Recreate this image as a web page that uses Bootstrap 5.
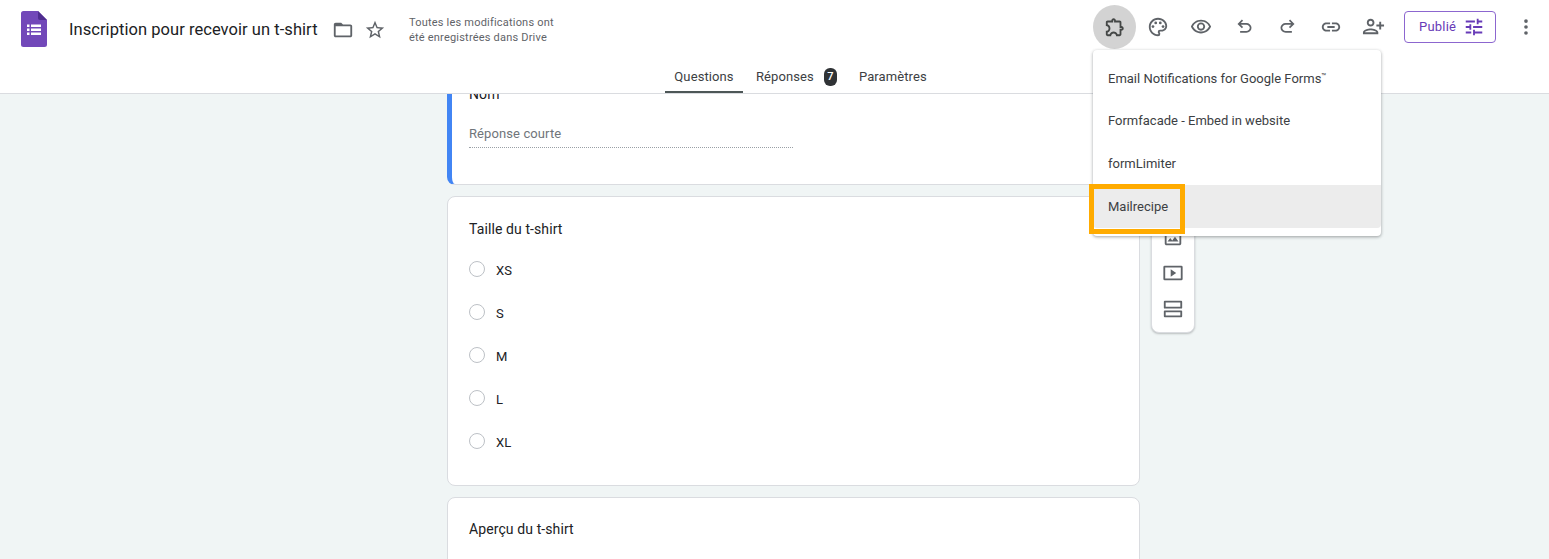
<!DOCTYPE html>
<html lang="fr">
<head>
<meta charset="utf-8">
<title>Inscription pour recevoir un t-shirt</title>
<link href="https://cdn.jsdelivr.net/npm/bootstrap@5.3.0/dist/css/bootstrap.min.css" rel="stylesheet">
<style>
html,body{height:100%;overflow:hidden}
body{font-family:Roboto,"Liberation Sans",sans-serif;background:#f0f5f5;color:#202124;font-size:14px}
.gf-shell{height:559px}
.gf-head{height:94px;background:#fff;border-bottom:1px solid #dadce0;position:relative;z-index:3;flex:none}
.gf-top{height:57px;padding-left:21px;padding-top:3px}
.gf-logo{width:26px;height:36px;display:block;margin-top:-3px}
.gf-title{font-size:16.5px;line-height:24px;margin-left:22px;width:258px;white-space:nowrap;color:#202124;letter-spacing:.05px}
.gf-ico{width:32px;height:32px;display:flex;align-items:center;justify-content:center;color:#5f6368;padding:0;border:0;background:none}
.gf-ico svg{fill:currentColor;display:block}
.gf-status{font-size:11px;line-height:15.5px;color:#5f6368;margin-left:18px;width:180px;letter-spacing:.2px}
.gf-tools{margin-left:auto;margin-right:2px;margin-top:-7px}
.gf-tool{width:43px;height:44px;display:flex;align-items:center;justify-content:center;color:#5f6368;background:none;border:0;padding:0;border-radius:50%}
.gf-tool svg{fill:currentColor;display:block}
.gf-tool-on{background:#d3d3d3;color:#444746}
.gf-tool-gap{margin-right:1px}
.gf-pub{width:92px;height:32px;margin-left:9px;margin-right:8px;border:1px solid #8c66cf;border-radius:4px;color:#673ab7;font-size:13px;letter-spacing:.2px;padding:0 10px 0 14px;background:#fff;display:flex;align-items:center;justify-content:space-between}
.gf-pub svg{fill:#673ab7;display:block}
.gf-tabs{height:36px;padding-left:665px}
.gf-tab{height:36px;line-height:40px;font-size:13px;letter-spacing:.1px;color:#3c4043;padding:0;text-decoration:none;display:flex;align-items:flex-start}
.gf-tab-on{width:78px;justify-content:center;border-bottom:2px solid #4d5757;color:#3c4043}
.gf-tab-a{margin-left:13px}
.gf-tab-b{margin-left:22px}
.gf-count{width:13px;height:18px;background:#303336;color:#fff;border-radius:6px;font-size:11px;line-height:18px;text-align:center;font-weight:500;margin:11px 0 0 10px}
.gf-body{flex:1;overflow:hidden;position:relative;padding-left:447px;gap:11px}
.gf-col{width:693px;flex:none;gap:11px}
.gf-qcard{border:1px solid #dadce0;border-radius:8px;background:#fff;padding:0 21px;flex:none;box-shadow:none}
.gf-q1{margin-top:-30px;height:121px;border-left:5px solid #4285f4;border-top:0;padding:20px 0 0 17px}
.gf-q2{height:290px;padding-top:22px}
.gf-q3{height:120px;padding-top:21px}
.gf-label{font-size:14px;line-height:21px;color:#202124;letter-spacing:.1px}
.gf-short{width:324px;margin-top:19px;height:24px;border-bottom:1px dotted #9aa0a6;color:#70757a;font-size:13px;line-height:19px;letter-spacing:.1px}
.gf-opts{margin-top:9px}
.gf-opt{height:43px;font-size:13px;color:#202124;letter-spacing:.1px}
.gf-radio{width:16px;height:16px;border:1px solid #bdc1c6;border-radius:50%;margin-right:11px;flex:none;margin-top:-4px}
.gf-side{width:44px;height:233px;margin-top:6px;background:#fff;border:1px solid #dadce0;border-radius:8px;box-shadow:0 1px 2px rgba(60,64,67,.3);flex:none;padding-bottom:5px;color:#5f6368;justify-content:flex-end;align-items:center}
.gf-side svg{display:block;fill:currentColor}
.gf-sidebtn{height:36px;display:flex;align-items:center}
.gf-menu{position:absolute;left:1093px;top:50px;width:288px;height:186px;background:#fff;border-radius:4px;z-index:5;padding-top:5px;box-shadow:0 1px 3px rgba(60,64,67,.35),0 1px 3px 1px rgba(60,64,67,.1)}
.gf-item{height:43px;line-height:43px;padding:0 0 0 15px;font-size:13px;color:#3c4043;border:0;background:transparent;letter-spacing:0;white-space:nowrap}
.gf-item-first{height:44px}
.gf-item-on{background:#ececec;position:relative}
.gf-mark{position:absolute;left:-4px;top:-1px;width:96px;height:50px;border:5px solid #ffab00;pointer-events:none}
.gf-tm{font-size:8px;vertical-align:4px}
</style>
</head>
<body>
<div class="gf-shell d-flex flex-column position-relative">
  <header class="gf-head">
    <div class="gf-top d-flex align-items-center">
      <svg class="gf-logo" viewBox="0 0 26 36" aria-hidden="true">
        <path d="M2.5 0H17l9 9v24.5a2.500 2.500 0 0 1-2.500 2.500h-21A2.500 2.500 0 0 1 0 33.500v-31A2.500 2.500 0 0 1 2.500 0z" fill="#7248b9"/>
        <path d="M17 0l9 9h-7a2 2 0 0 1-2-2z" fill="#4f2d8f"/>
        <g fill="#fff"><rect x="6" y="13.500" width="2.500" height="2.500"/><rect x="6" y="17.500" width="2.500" height="2.500"/><rect x="6" y="21.500" width="2.500" height="2.500"/><rect x="10" y="13.500" width="10" height="2.500"/><rect x="10" y="17.500" width="10" height="2.500"/><rect x="10" y="21.500" width="10" height="2.500"/></g>
      </svg>
      <div class="gf-title">Inscription pour recevoir un t-shirt</div>
      <button class="gf-ico" type="button" aria-label="Déplacer"><svg width="22" height="22" viewBox="0 0 24 24"><path d="M20 6h-8l-2-2H4c-1.100 0-1.990.9-1.990 2L2 18c0 1.100.9 2 2 2h16c1.100 0 2-.9 2-2V8c0-1.100-.9-2-2-2zm0 12H4V8h16v10z"/></svg></button>
      <button class="gf-ico" type="button" aria-label="Suivre"><svg width="22" height="22" viewBox="0 0 24 24"><path d="M22 9.240l-7.190-.62L12 2 9.190 8.630 2 9.240l5.460 4.730L5.820 21 12 17.270 18.180 21l-1.630-7.030L22 9.240zM12 15.400l-3.760 2.270 1-4.280-3.320-2.880 4.380-.38L12 6.100l1.710 4.040 4.380.38-3.320 2.880 1 4.280L12 15.400z"/></svg></button>
      <div class="gf-status">Toutes les modifications ont<br>été enregistrées dans Drive</div>
      <div class="gf-tools d-flex align-items-center">
        <button class="gf-tool gf-tool-on" type="button" aria-label="Modules"><svg width="22" height="22" viewBox="0 0 24 24"><path d="M10.500 4.500c.28 0 .5.22.5.5v2h6v6h2c.28 0 .5.22.5.5s-.22.5-.5.5h-2v6h-2.120c-.68-1.750-2.390-3-4.380-3s-3.700 1.250-4.380 3H4v-2.120c1.750-.68 3-2.390 3-4.380 0-1.990-1.240-3.700-2.990-4.380L4 7h6V5c0-.28.22-.5.5-.5m0-2C9.120 2.500 8 3.620 8 5H4c-1.100 0-1.990.9-1.990 2v3.800h.29c1.490 0 2.700 1.210 2.700 2.700s-1.210 2.700-2.700 2.700H2V20c0 1.100.9 2 2 2h3.800v-.3c0-1.490 1.210-2.700 2.700-2.700s2.700 1.210 2.700 2.700v.3H17c1.100 0 2-.9 2-2v-4c1.380 0 2.500-1.120 2.500-2.500S20.380 11 19 11V7c0-1.100-.9-2-2-2h-4c0-1.380-1.120-2.500-2.500-2.500z"/></svg></button>
        <button class="gf-tool" type="button" aria-label="Thème"><svg width="22" height="22" viewBox="0 0 24 24"><path d="M12 22C6.490 22 2 17.510 2 12S6.490 2 12 2s10 4.040 10 9c0 3.310-2.690 6-6 6h-1.770c-.28 0-.5.22-.5.5 0 .12.05.23.13.33.41.47.64 1.060.64 1.670A2.500 2.500 0 0 1 12 22zm0-18c-4.410 0-8 3.590-8 8s3.590 8 8 8c.28 0 .5-.22.5-.5a.54.54 0 0 0-.14-.35c-.41-.46-.63-1.050-.63-1.650a2.500 2.500 0 0 1 2.500-2.500H16c2.210 0 4-1.790 4-4 0-3.860-3.590-7-8-7z"/><circle cx="6.500" cy="11.500" r="1.500"/><circle cx="9.500" cy="7.500" r="1.500"/><circle cx="14.500" cy="7.500" r="1.500"/><circle cx="17.500" cy="11.500" r="1.500"/></svg></button>
        <button class="gf-tool gf-tool-gap" type="button" aria-label="Aperçu"><svg width="22" height="22" viewBox="0 0 24 24"><path d="M12 6a9.770 9.770 0 0 1 8.820 5.500C19.170 14.870 15.790 17 12 17s-7.170-2.130-8.820-5.500A9.770 9.770 0 0 1 12 6m0-2C7 4 2.730 7.110 1 11.500 2.730 15.890 7 19 12 19s9.270-3.110 11-7.500C21.270 7.110 17 4 12 4zm0 5a2.500 2.500 0 0 1 0 5 2.500 2.500 0 0 1 0-5m0-2c-2.480 0-4.500 2.020-4.500 4.500S9.520 16 12 16s4.500-2.020 4.500-4.500S14.480 7 12 7z"/></svg></button>
        <button class="gf-tool" type="button" aria-label="Annuler"><svg width="21" height="21" viewBox="0 0 24 24"><path d="M7 19v-2h7.100q1.575 0 2.738-1T18 13.500q0-1.500-1.163-2.500T14.100 10H7.800l2.600 2.600L9 14 4 9l5-5 1.400 1.400L7.800 8h6.300q2.425 0 4.163 1.575T20 13.500q0 2.350-1.738 3.925T14.100 19z"/></svg></button>
        <button class="gf-tool" type="button" aria-label="Rétablir"><svg width="21" height="21" viewBox="0 0 24 24"><path transform="matrix(-1 0 0 1 24 0)" d="M7 19v-2h7.100q1.575 0 2.738-1T18 13.500q0-1.500-1.163-2.500T14.100 10H7.800l2.600 2.600L9 14 4 9l5-5 1.400 1.400L7.800 8h6.300q2.425 0 4.163 1.575T20 13.500q0 2.350-1.738 3.925T14.100 19z"/></svg></button>
        <button class="gf-tool" type="button" aria-label="Lien"><svg width="22" height="22" viewBox="0 0 24 24"><path d="M17 7h-4v2h4c1.650 0 3 1.350 3 3s-1.350 3-3 3h-4v2h4c2.760 0 5-2.240 5-5s-2.240-5-5-5zm-6 8H7c-1.650 0-3-1.350-3-3s1.350-3 3-3h4V7H7c-2.760 0-5 2.240-5 5s2.240 5 5 5h4v-2zm-3-4h8v2H8z"/></svg></button>
        <button class="gf-tool" type="button" aria-label="Ajouter"><svg width="23" height="23" viewBox="0 0 24 24"><path transform="matrix(-1 0 0 1 24 0)" d="M15 12c2.210 0 4-1.790 4-4s-1.790-4-4-4-4 1.790-4 4 1.790 4 4 4zm0-6c1.100 0 2 .9 2 2s-.9 2-2 2-2-.9-2-2 .9-2 2-2zm0 8c-2.670 0-8 1.340-8 4v2h16v-2c0-2.660-5.330-4-8-4zm-6 4c.22-.62 3.060-2 6-2 2.960 0 5.800 1.380 6 2H9zm-3-3v-3h3v-2H6V7H4v3H1v2h3v3h2z"/></svg></button>
        <button class="gf-pub" type="button"><span>Publié</span><svg width="22" height="22" viewBox="0 0 24 24"><path d="M3 17v2h6v-2H3zM3 5v2h10V5H3zm10 16v-2h8v-2h-8v-2h-2v6h2zM7 9v2H3v2h4v2h2V9H7zm14 4v-2H11v2h10zm-6-4h2V7h4V5h-4V3h-2v6z"/></svg></button>
        <button class="gf-tool" type="button" aria-label="Plus"><svg width="22" height="22" viewBox="0 0 24 24"><circle cx="12" cy="5.500" r="2"/><circle cx="12" cy="12" r="2"/><circle cx="12" cy="18.500" r="2"/></svg></button>
      </div>
    </div>
    <nav class="gf-tabs d-flex">
      <a class="gf-tab gf-tab-on" href="#">Questions</a>
      <a class="gf-tab gf-tab-a" href="#">Réponses<span class="gf-count">7</span></a>
      <a class="gf-tab gf-tab-b" href="#">Paramètres</a>
    </nav>
  </header>

  <main class="gf-body d-flex align-items-start">
    <div class="gf-col d-flex flex-column">
      <section class="card gf-qcard gf-q1">
        <div class="gf-label">Nom</div>
        <div class="gf-short">Réponse courte</div>
      </section>
      <section class="card gf-qcard gf-q2">
        <div class="gf-label">Taille du t-shirt</div>
        <div class="gf-opts">
          <div class="gf-opt d-flex align-items-center"><span class="gf-radio"></span>XS</div>
          <div class="gf-opt d-flex align-items-center"><span class="gf-radio"></span>S</div>
          <div class="gf-opt d-flex align-items-center"><span class="gf-radio"></span>M</div>
          <div class="gf-opt d-flex align-items-center"><span class="gf-radio"></span>L</div>
          <div class="gf-opt d-flex align-items-center"><span class="gf-radio"></span>XL</div>
        </div>
      </section>
      <section class="card gf-qcard gf-q3">
        <div class="gf-label">Aperçu du t-shirt</div>
      </section>
    </div>
    <aside class="gf-side d-flex flex-column">
      <div class="gf-sidebtn"><svg width="22" height="22" viewBox="0 0 24 24"><path d="M19 5v14H5V5h14m0-2H5c-1.100 0-2 .9-2 2v14c0 1.100.9 2 2 2h14c1.100 0 2-.9 2-2V5c0-1.100-.9-2-2-2zm-4.860 8.860l-3 3.870L9 13.140 6 17h12l-3.860-5.140z"/></svg></div>
      <div class="gf-sidebtn"><svg width="22" height="22" viewBox="0 0 24 24"><path d="M3 4h18a1.500 1.500 0 0 1 1.500 1.500v13A1.500 1.500 0 0 1 21 20H3a1.500 1.500 0 0 1-1.500-1.500v-13A1.500 1.500 0 0 1 3 4zm.500 2v12h17V6h-17zM9.500 8l6 4-6 4z"/></svg></div>
      <div class="gf-sidebtn"><svg width="22" height="22" viewBox="0 0 24 24"><path d="M3 3h18a1 1 0 0 1 1 1v6.500a1 1 0 0 1-1 1H3a1 1 0 0 1-1-1V4a1 1 0 0 1 1-1zm1 2v4.500h16V5H4zM3 13.500h18a1 1 0 0 1 1 1V20a1 1 0 0 1-1 1H3a1 1 0 0 1-1-1v-5.500a1 1 0 0 1 1-1zm1 2V19h16v-3.500H4z"/></svg></div>
    </aside>
  </main>

  <div class="gf-menu list-group list-group-flush">
    <div class="list-group-item gf-item gf-item-first">Email Notifications for Google Forms<span class="gf-tm">™</span></div>
    <div class="list-group-item gf-item">Formfacade - Embed in website</div>
    <div class="list-group-item gf-item">formLimiter</div>
    <div class="list-group-item gf-item gf-item-on">Mailrecipe<span class="gf-mark"></span></div>
  </div>
</div>
<script src="https://cdn.jsdelivr.net/npm/bootstrap@5.3.0/dist/js/bootstrap.bundle.min.js"></script>
</body>
</html>
